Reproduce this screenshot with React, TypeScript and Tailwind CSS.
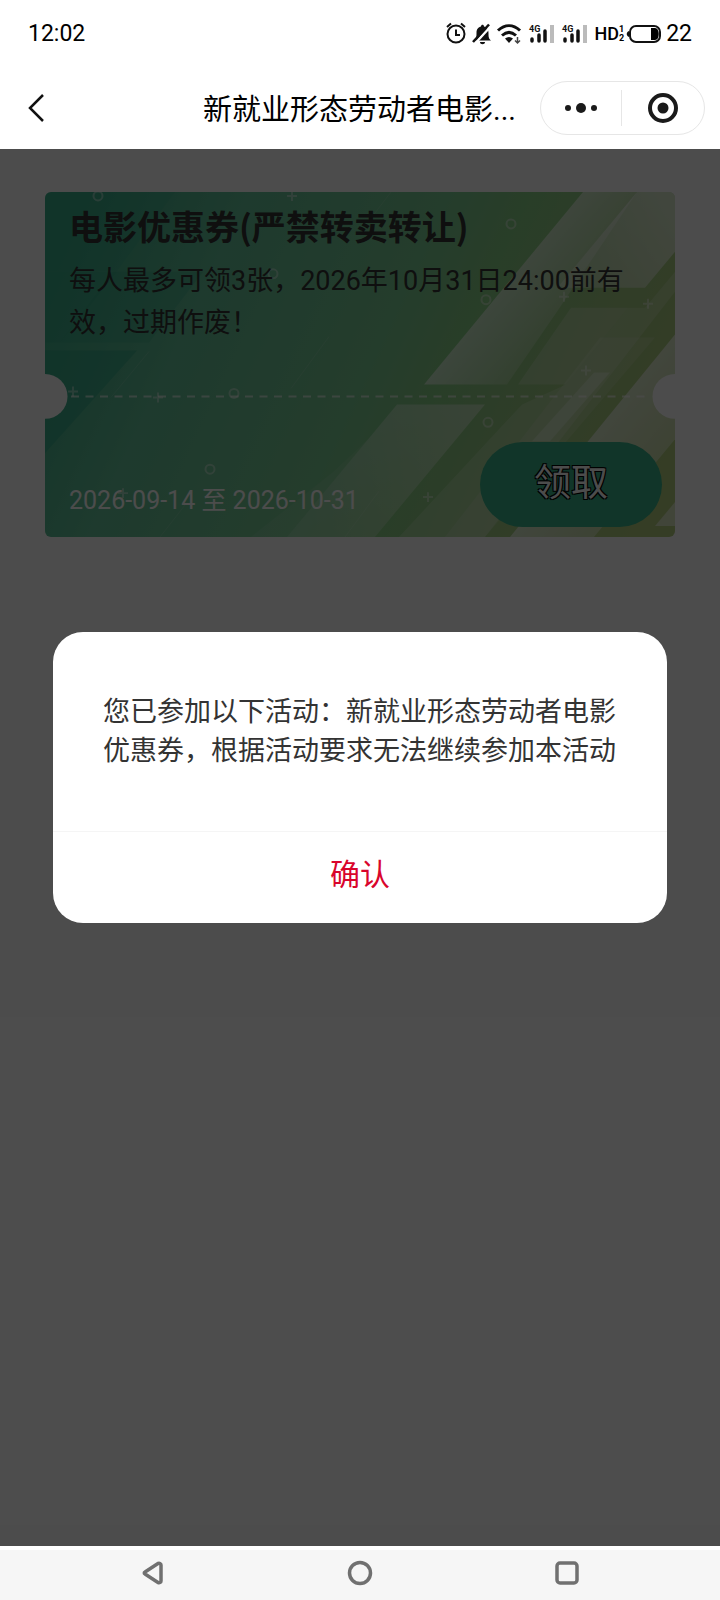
import { ReactNode } from "react";

// confetti on the coupon, in coupon coordinates
const RINGS = [
    [53, 4], [466, 32], [228, 82], [441, 108], [189, 202], [165, 278], [443, 231],
];

const PLUSES = [
    [247, 4], [519, 105], [603, 112], [541, 179], [28, 200], [113, 206], [383, 306], [78, 302],
];

function SignalBars({ x }: { x: number }) {
    return (
        <g>
            <g stroke="#111" strokeWidth="3.5" strokeLinecap="round">
                <path d={`M${x + 2} 17v2`} />
                <path d={`M${x + 9} 13v6`} />
                <path d={`M${x + 15} 9v10`} />
            </g>
            <path d={`M${x + 22} 3v18`} stroke="#bbb" strokeWidth="4" />
            <text x={x - 1} y="10" fontSize="9" fontWeight="700" fill="#111">4G</text>
        </g>
    );
}

function StatusIcons() {
    return (
        <svg width="142" height="24" viewBox="0 0 142 24" fill="none" aria-hidden="true" className="shrink-0">
            {/* alarm */}
            <circle cx="10" cy="12" r="8.5" stroke="#111" strokeWidth="2" />
            <path d="M10 7.5v5.5h4" stroke="#111" strokeWidth="2" />
            <path d="M1 5l4-3.5M19 5l-4-3.5" stroke="#111" strokeWidth="2" />
            {/* muted bell */}
            <path d="M28 18.500c2.500-2 2.500-4 2.500-7.500 0-4 2-6 4.500-6.500 0-2.500 3-2.500 3 0 3 .5 4.500 3 4.500 6.500 0 3.500 0 5.500 2.500 7.500z" fill="#111" />
            <path d="M34 20h5c0 3-5 3-5 0z" fill="#111" />
            <path d="M29.500 21L45 4" stroke="#fff" strokeWidth="2.5" />
            <path d="M27 20L43 2.500" stroke="#111" strokeWidth="2.5" />
            {/* wifi */}
            <path d="M52 8.500c7-6.500 15-6.500 22 0M56 13.500c4.500-4 9.500-4 14 0" stroke="#111" strokeWidth="3" />
            <path d="M59 16.500c2.500-2 5.500-2 8 0l-4 4.500z" fill="#111" />
            <path d="M71.500 15v6M69 18.500l2.500 2.500 2.500-2.500" stroke="#444" strokeWidth="1.5" />
            <SignalBars x={84} />
            <SignalBars x={117} />
        </svg>
    );
}

function StatusBar() {
    return (
        <div className="flex h-[68px] items-center justify-between px-7 text-[23px] text-black">
            <span>12:02</span>
            <div className="flex items-center">
                <StatusIcons />
                <span className="ml-1.5 text-lg font-medium">HD</span>
                <span className="flex flex-col text-[9px] leading-[9px] font-bold">
                    <span>1</span>
                    <span>2</span>
                </span>
                <svg width="36" height="20" viewBox="0 0 36 20" fill="none" aria-hidden="true" className="ml-0.5">
                    <rect x="4" y="2" width="30" height="16" rx="6" stroke="#111" strokeWidth="2" />
                    <path d="M3 7C0 8 0 12 3 13z" fill="#111" />
                    <path d="M25 4h4c5 0 5 12 0 12h-4z" fill="#000" />
                </svg>
                <span className="ml-1">22</span>
            </div>
        </div>
    );
}

function Header({ children }: { children: ReactNode }) {
    return (
        <header className="flex h-[81px] items-center justify-between pr-[15px] pb-0.5 pl-6">
            <button type="button" aria-label="返回" className="w-[179px]">
                <svg width="24" height="30" viewBox="0 0 24 30" fill="none" stroke="#111" strokeWidth="2.5">
                    <path d="M19 2L6 15l13 13" />
                </svg>
            </button>
            <h1 className="flex-1 pt-1 text-[29px] leading-10 whitespace-nowrap text-black">{children}</h1>
            <div className="flex h-[54px] w-[165px] items-center rounded-full border border-[#e6e6e6]">
                <button type="button" aria-label="更多" className="flex w-20 justify-center">
                    <svg width="34" height="12" viewBox="0 0 34 12" fill="#1a1a1a">
                        <circle cx="4" cy="6" r="3" />
                        <circle cx="17" cy="6" r="5" />
                        <circle cx="30" cy="6" r="3" />
                    </svg>
                </button>
                <span className="h-9 w-px bg-[#e6e6e6]" />
                <button type="button" aria-label="关闭" className="flex flex-1 justify-center">
                    <svg width="30" height="30" viewBox="0 0 30 30" fill="none">
                        <circle cx="15" cy="15" r="13" stroke="#1a1a1a" strokeWidth="4" />
                        <circle cx="15" cy="15" r="5.5" fill="#1a1a1a" />
                    </svg>
                </button>
            </div>
        </header>
    );
}

function CouponArt() {
    return (
        <svg
            className="absolute inset-0 h-full w-full"
            viewBox="0 0 630 346"
            preserveAspectRatio="none"
            fill="none"
            aria-hidden="true"
        >
            <defs>
                <linearGradient id="base" gradientUnits="userSpaceOnUse" x1="20" y1="60" x2="600" y2="330">
                    <stop offset="0" stopColor="#3fb18c" />
                    <stop offset="0.22" stopColor="#64c299" />
                    <stop offset="0.5" stopColor="#7acb94" />
                    <stop offset="0.62" stopColor="#88cf86" />
                    <stop offset="0.8" stopColor="#a2cc84" />
                    <stop offset="1" stopColor="#b2cc7c" />
                </linearGradient>
                <linearGradient id="beam" gradientUnits="userSpaceOnUse" x1="459" y1="96" x2="520" y2="146">
                    <stop offset="0" stopColor="#fff" stopOpacity="0.55" />
                    <stop offset="0.5" stopColor="#fff" stopOpacity="0.35" />
                    <stop offset="1" stopColor="#fff" stopOpacity="0.12" />
                </linearGradient>
                <linearGradient id="pane" gradientUnits="userSpaceOnUse" x1="540" y1="90" x2="630" y2="20">
                    <stop offset="0" stopColor="#fff" stopOpacity="0.35" />
                    <stop offset="1" stopColor="#fff" stopOpacity="0.6" />
                </linearGradient>
                <linearGradient id="ray" gradientUnits="userSpaceOnUse" x1="580" y1="200" x2="640" y2="250">
                    <stop offset="0" stopColor="#fff" stopOpacity="0.6" />
                    <stop offset="1" stopColor="#fff" stopOpacity="0.35" />
                </linearGradient>
                <linearGradient id="sheet" gradientUnits="userSpaceOnUse" x1="420" y1="213" x2="280" y2="346">
                    <stop offset="0" stopColor="#fff" stopOpacity="0.4" />
                    <stop offset="1" stopColor="#fff" stopOpacity="0.2" />
                </linearGradient>
            </defs>
            <rect width="630" height="346" fill="url(#base)" />

            {/* dark steps on the left */}
            <g fill="#2ca585">
                <path d="M0 0h130L72 79H0z" fillOpacity="0.2" />
                <path d="M0 80h72L15 151H0z" fillOpacity="0.25" />
                <path d="M68 80h90L104 151H15z" fillOpacity="0.25" />
                <path d="M0 159h92L0 262z" fillOpacity="0.5" />
            </g>
            <g stroke="#fff" strokeOpacity="0.12" strokeWidth="1">
                <path d="M104 160L66 206M284 145l-38 52M115 346l25-32M346 0l-32 42M300 346l34-46" />
            </g>

            {/* slanted beams on the right */}
            <path d="M538 0h54L512 120l-50 73h-83z" fill="url(#beam)" />
            <path d="M592 0h38v60l-30 36h-80l-6-2z" fill="url(#pane)" />
            <path d="M526 116h57l-62 77h-48z" fill="#fff" fillOpacity="0.22" />
            <path d="M583 116L521 193l-44 20L354 346h86L630 100v-20l-30 36z" fill="#fff" fillOpacity="0.18" />
            <path d="M352 213h88L330 346H242z" fill="url(#sheet)" />
            <path d="M242 346l83-100-36 34-83 66z" fill="#fff" fillOpacity="0.08" />
            <path d="M440 346L610 146h-55L400 346z" fill="#fff" fillOpacity="0.14" />
            <path d="M549 181h16l-60 69h-18z" fill="#fff" fillOpacity="0.3" />
            <path d="M630 143v105l-81 98h-84z" fill="url(#ray)" />
            <path d="M630 311v24h-20z" fill="#fff" fillOpacity="0.5" />

            <g stroke="#fff" strokeOpacity="0.4" strokeWidth="2">
                {RINGS.map(([x, y]) => (
                    <circle key={`${x}-${y}`} cx={x} cy={y} r="4.5" />
                ))}
                {PLUSES.map(([x, y]) => (
                    <path key={`${x}-${y}`} d={`M${x - 5} ${y}h10M${x} ${y - 5}v10`} />
                ))}
            </g>
            <path d="M26 205H600" stroke="#fff" strokeOpacity="0.6" strokeWidth="2" strokeDasharray="8 6.5" />
            <circle cx="0" cy="205" r="22.5" fill="#fff" />
            <circle cx="630" cy="205" r="22.5" fill="#fff" />
        </svg>
    );
}

function Coupon() {
    return (
        <section className="relative overflow-hidden rounded-md">
            <CouponArt />
            <div className="relative flex flex-col pt-[11px] pr-[13px] pb-[10px] pl-6">
                <h2 className="font-['Noto_Sans_CJK_SC',sans-serif] text-[34px] leading-[46px] font-bold text-[#333]">
                    电影优惠券(严禁转卖转让)
                </h2>
                <p className="mt-[11px] pr-5 text-[27px] leading-[42px] text-[#333]">
                    每人最多可领3张，2026年10月31日24:00前有效，过期作废！
                </p>
                <div className="mt-[98px] flex items-end justify-between">
                    <p className="pb-2.5 text-[25px] leading-8 text-white">2026-09-14 至 2026-10-31</p>
                    <button
                        type="button"
                        className="h-[85px] w-[182px] rounded-full bg-[#39b189] pb-0.5 text-[37px] text-white [text-shadow:-1px_-1px_0_#000,1px_-1px_0_#000,-1px_1px_0_#000,1px_1px_0_#000]"
                    >
                        领取
                    </button>
                </div>
            </div>
        </section>
    );
}

function Dialog() {
    return (
        <div className="absolute inset-0 bg-black/70 px-[53px] pt-[483px]">
            <div role="dialog" aria-modal="true" className="overflow-hidden rounded-[30px] bg-white">
                <p className="px-[50px] pt-[61px] pb-[60px] text-[27px] leading-[39px] text-[#333]">
                    您已参加以下活动：新就业形态劳动者电影优惠券，根据活动要求无法继续参加本活动
                </p>
                <button type="button" className="h-[92px] w-full border-t border-[#f5f5f5] pb-1.5 text-3xl text-[#d9052c]">
                    确认
                </button>
            </div>
        </div>
    );
}

function NavBar() {
    return (
        <nav className="border-t-4 border-white bg-[#f6f6f6]">
            <div className="flex h-[50px] items-center justify-around px-[50px] pb-1">
                <button type="button" aria-label="返回">
                    <svg width="26" height="26" viewBox="0 0 26 26" fill="none" stroke="#707070" strokeWidth="3.5" strokeLinejoin="round">
                        <path d="M5 12c-1 .5-1 1.500 0 2l13 8.500c1.500.5 3 0 3-1.500v-16c0-1.500-1.500-2-3-1.500z" />
                    </svg>
                </button>
                <button type="button" aria-label="主页">
                    <svg width="26" height="26" viewBox="0 0 26 26" fill="none" stroke="#707070" strokeWidth="3.5">
                        <circle cx="13" cy="13" r="10.5" />
                    </svg>
                </button>
                <button type="button" aria-label="最近任务">
                    <svg width="26" height="26" viewBox="0 0 26 26" fill="none" stroke="#707070" strokeWidth="3.5">
                        <rect x="3" y="3" width="20" height="20" rx="3" />
                    </svg>
                </button>
            </div>
        </nav>
    );
}

export default function App() {
    return (
        <div className="flex min-h-screen flex-col bg-white font-['Roboto','Noto_Sans_CJK_SC',sans-serif]">
            <StatusBar />
            <Header>新就业形态劳动者电影...</Header>
            <main className="relative flex-1 px-[45px] pt-[43px]">
                <Coupon />
                <Dialog />
            </main>
            <NavBar />
        </div>
    );
}
